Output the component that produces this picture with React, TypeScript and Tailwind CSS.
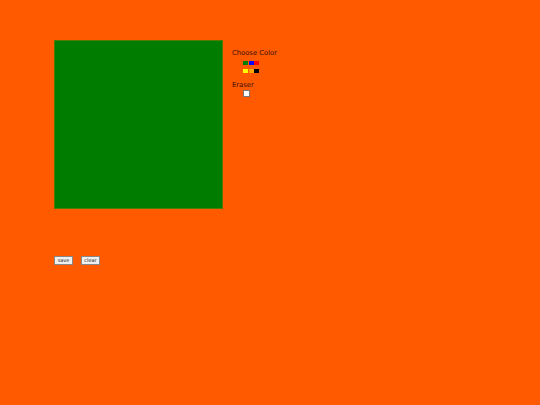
const swatches = ['#008000', '#0000ff', '#ff0000', '#ffff00', '#ffa500', '#000000'];

export default function App() {
    return (
        <div className="w-full h-screen bg-[#ff5a00] pt-[40px] pl-[54px] font-['DejaVu_Sans',sans-serif] text-[#3a0e00]">
            <div className="flex items-start">
                <div className="w-[169px] h-[169px] bg-[#007c00] border border-[#4f7a00]" />
                <div className="ml-[9px] pt-[9px] text-[6.8px] leading-[9px]">
                    <div>Choose Color</div>
                    <div className="grid grid-cols-3 gap-x-[1px] gap-y-[4px] w-[16px] ml-[11px] mt-[3px]">
                        {swatches.map(c => (
                            <div key={c} className="w-[5px] h-[4px]" style={{ backgroundColor: c }} />
                        ))}
                    </div>
                    <div className="mt-[8px]">Eraser</div>
                    <div className="ml-[11px] w-[7px] h-[7px] bg-white border border-[#777]" />
                </div>
            </div>
            <div className="flex gap-[8px] mt-[47px]">
                <button className="w-[19px] h-[9px] bg-[#efefef] border border-[#888] text-[5px] leading-[7px] text-[#222]">save</button>
                <button className="w-[19px] h-[9px] bg-[#efefef] border border-[#888] text-[5px] leading-[7px] text-[#222]">clear</button>
            </div>
        </div>
    );
}
